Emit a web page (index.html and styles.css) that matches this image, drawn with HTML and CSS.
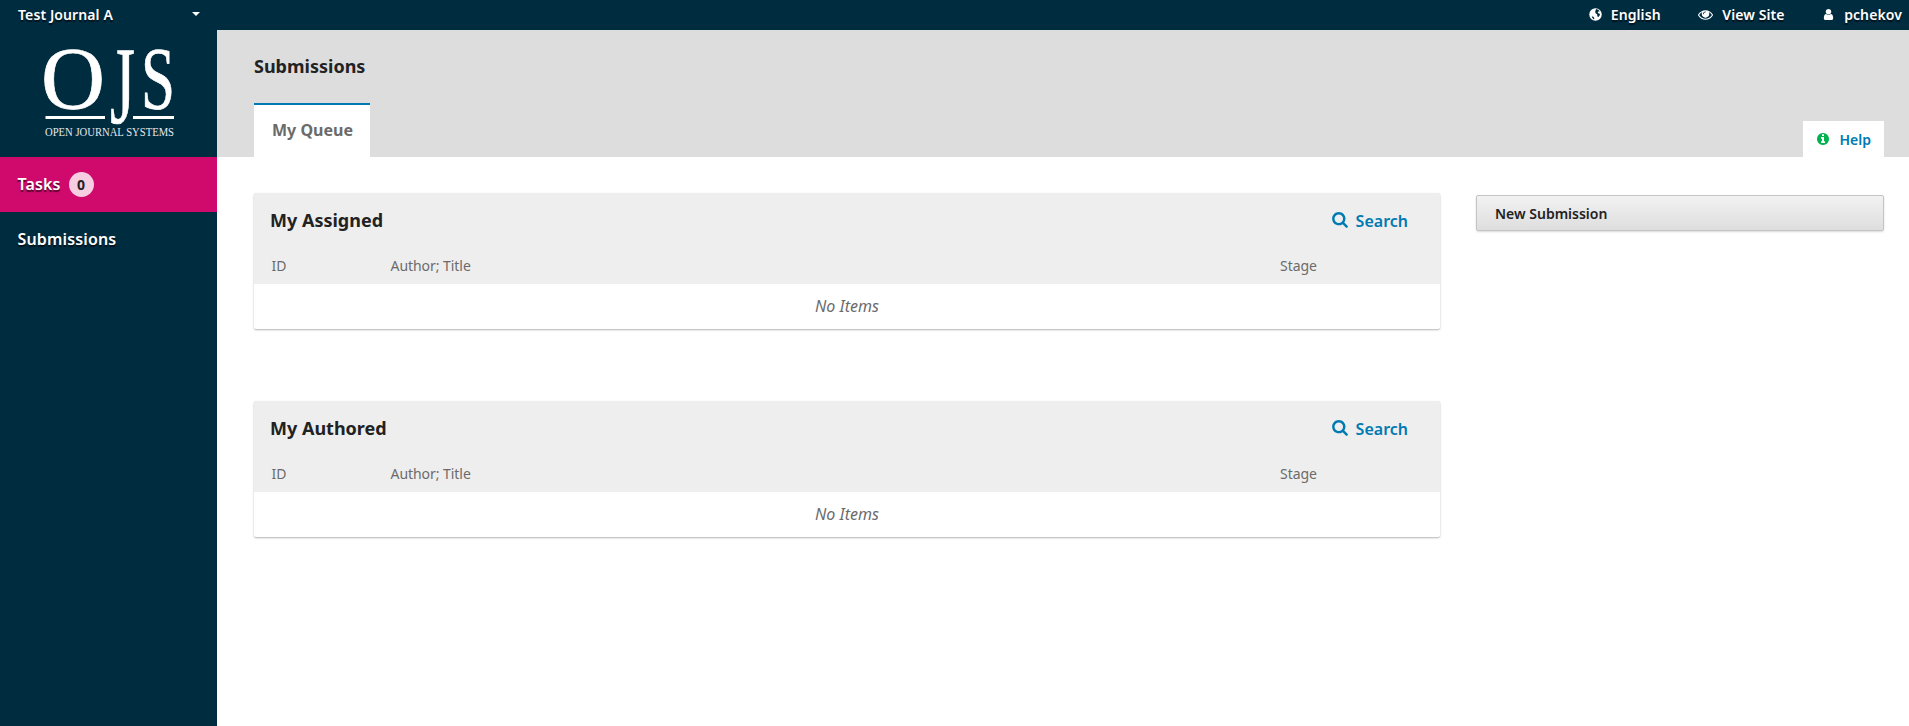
FILE: index.html
```html
<!DOCTYPE html>
<html lang="en">
<head>
  <meta charset="UTF-8">
  <title>Submissions | OJS</title>
  <link rel="stylesheet" href="styles.css">
</head>
<body>
  <!-- Top bar -->
  <header class="topbar">
    <a class="journal-switch">Test Journal A<span class="caret"></span></a>
    <nav class="user-nav">
      <a class="user-link">
        <svg class="user-icon" viewBox="0 0 24 24"><circle cx="12" cy="12" r="11.5" fill="#fff"/><path fill="#002c40" d="M13 2l4 1 3 3-3 .5-1 2.500 3 1 1.500 2.500-3 4-2-1-.5-4-3-2-.5-3.500zM5 15l3 1 2 2.500-1 2.500-3-3z"/></svg>
        English
      </a>
      <a class="user-link">
        <svg class="user-icon eye" viewBox="0 0 1792 1792"><path fill="#fff" d="M1664 960q-152-236-381-353 61 104 61 225 0 185-131.500 316.500t-316.500 131.500-316.500-131.500-131.500-316.500q0-121 61-225-229 117-381 353 133 205 333.500 326.500t434.500 121.500 434.500-121.500 333.500-326.500zm-720-384q0-20-14-34t-34-14q-125 0-214.500 89.500t-89.500 214.500q0 20 14 34t34 14 34-14 14-34q0-86 61-147t147-61q20 0 34-14t14-34zm848 384q0 34-20 69-140 230-376.500 368.500t-499.500 138.500-499.500-139-376.500-368q-20-35-20-69t20-69q140-229 376.500-368t499.500-139 499.500 139 376.500 368q20 35 20 69z"/></svg>
        View Site
      </a>
      <a class="user-link">
        <svg class="user-icon" viewBox="0 0 1792 1792"><path fill="#fff" d="M1536 1399q0 109-62.500 187t-150.500 78h-854q-88 0-150.500-78t-62.500-187q0-85 8.500-160.500t31.500-152 58.500-131 94-89 134.500-34.500q131 128 313 128t313-128q76 0 134.500 34.500t94 89 58.500 131 31.500 152 8.500 160.500zm-256-887q0 159-112.500 271.500t-271.500 112.500-271.500-112.500-112.500-271.500 112.500-271.500 271.500-112.500 271.500 112.500 112.500 271.500z"/></svg>
        pchekov
      </a>
    </nav>
  </header>

  <div class="layout">
    <!-- Sidebar -->
    <aside class="sidebar">
      <div class="logo">
        <svg viewBox="0 0 217 127" width="217" height="127" role="img">
          <text class="logo-mark" x="41" y="78" textLength="64" lengthAdjust="spacingAndGlyphs">O</text>
          <text class="logo-mark logo-j" x="110" y="93" textLength="25" lengthAdjust="spacingAndGlyphs">J</text>
          <text class="logo-mark" x="141" y="78" textLength="34" lengthAdjust="spacingAndGlyphs">S</text>
          <rect x="45.500" y="86" width="59.500" height="3" fill="#fff"/>
          <rect x="133" y="86" width="41" height="3" fill="#fff"/>
          <text class="logo-sub" x="45" y="106" textLength="129" lengthAdjust="spacingAndGlyphs">OPEN JOURNAL SYSTEMS</text>
        </svg>
      </div>
      <a class="side-item active">Tasks <span class="badge">0</span></a>
      <a class="side-item">Submissions</a>
    </aside>

    <div class="main">
      <!-- Page header with tabs -->
      <div class="page-head">
        <h1>Submissions</h1>
        <div class="tabs-row">
          <a class="tab">My Queue</a>
          <a class="help-tab">
            <svg class="help-icon" viewBox="0 0 1792 1792"><circle cx="896" cy="896" r="560" fill="#fff"/><path fill="#00b24e" d="M1152 1376v-160q0-14-9-23t-23-9h-96v-512q0-14-9-23t-23-9h-320q-14 0-23 9t-9 23v160q0 14 9 23t23 9h96v320h-96q-14 0-23 9t-9 23v160q0 14 9 23t23 9h448q14 0 23-9t9-23zm-128-896v-160q0-14-9-23t-23-9h-192q-14 0-23 9t-9 23v160q0 14 9 23t23 9h192q14 0 23-9t9-23zm640 416q0 209-103 385.500t-279.500 279.500-385.500 103-385.500-103-279.500-279.500-103-385.500 103-385.500 279.500-279.500 385.500-103 385.500 103 279.500 279.500 103 385.500z"/></svg>
            Help
          </a>
        </div>
      </div>

      <div class="content">
        <div class="lists">
          <section class="panel">
            <div class="panel-head">
              <h2>My Assigned</h2>
              <a class="search-link">
                <svg class="search-icon" viewBox="0 0 1664 1792"><path fill="#007ab2" d="M1152 704q0-185-131.500-316.500t-316.500-131.500-316.500 131.500-131.500 316.500 131.500 316.500 316.500 131.500 316.500-131.500 131.500-316.500zm512 832q0 52-38 90t-90 38q-54 0-90-38l-343-342q-179 124-399 124-143 0-273.500-55.500t-225-150-150-225-55.500-273.500 55.500-273.500 150-225 225-150 273.500-55.500 273.500 55.500 225 150 150 225 55.500 273.500q0 220-124 399l343 343q37 37 37 90z"/></svg>
                Search
              </a>
            </div>
            <div class="columns"><span>ID</span><span>Author; Title</span><span>Stage</span></div>
            <div class="empty">No Items</div>
          </section>

          <section class="panel">
            <div class="panel-head">
              <h2>My Authored</h2>
              <a class="search-link">
                <svg class="search-icon" viewBox="0 0 1664 1792"><path fill="#007ab2" d="M1152 704q0-185-131.500-316.500t-316.500-131.500-316.500 131.500-131.500 316.500 131.500 316.500 316.500 131.500 316.500-131.500 131.500-316.500zm512 832q0 52-38 90t-90 38q-54 0-90-38l-343-342q-179 124-399 124-143 0-273.500-55.500t-225-150-150-225-55.500-273.500 55.500-273.500 150-225 225-150 273.500-55.500 273.500 55.500 225 150 150 225 55.500 273.500q0 220-124 399l343 343q37 37 37 90z"/></svg>
                Search
              </a>
            </div>
            <div class="columns"><span>ID</span><span>Author; Title</span><span>Stage</span></div>
            <div class="empty">No Items</div>
          </section>
        </div>

        <div class="side-actions">
          <a class="new-button">New Submission</a>
        </div>
      </div>
    </div>
  </div>
</body>
</html>
```

FILE: styles.css
```css
/* OJS backend dashboard */
body {
  margin: 0;
  height: 726px;
  overflow: hidden;
  font-family: "Noto Sans", sans-serif;
  font-size: 14px;
  color: #222;
  background: #fff;
  display: flex;
  flex-direction: column;
}

/* Top bar */
.topbar {
  height: 30px;
  flex: none;
  box-sizing: border-box;
  padding: 0 7px 2px 18px;
  background: #002c40;
  display: flex;
  justify-content: space-between;
  align-items: center;
  color: #fff;
  font-size: 14px;
  font-weight: 600;
  letter-spacing: 0.1px;
  text-shadow: 0 2px 1px rgba(0, 0, 0, 0.6);
}

.journal-switch {
  display: flex;
  align-items: center;
  width: 182px;
  justify-content: space-between;
}

.caret {
  width: 0;
  height: 0;
  border-left: 4px solid transparent;
  border-right: 4px solid transparent;
  border-top: 4px solid #fff;
}

.user-nav {
  display: flex;
  gap: 37.500px;
}

.user-link {
  display: flex;
  align-items: center;
  gap: 9px;
}

.user-icon {
  width: 13px;
  height: 13px;
}

.user-icon.eye {
  width: 15px;
  height: 15px;
}

/* Sidebar */
.layout {
  flex: 1;
  display: flex;
}

.sidebar {
  width: 217px;
  flex: none;
  background: #002c40;
  color: #fff;
}

.logo {
  height: 127px;
}

.logo svg {
  display: block;
  overflow: visible;
}

.logo-mark {
  font-family: "Liberation Serif", serif;
  font-size: 88px;
  fill: #fff;
  stroke: #fff;
  stroke-width: 0.7px;
}

.logo-j {
  font-size: 110px;
}

.logo-sub {
  font-family: "Liberation Serif", serif;
  font-size: 12px;
  fill: #e4e9ec;
}

.side-item {
  display: flex;
  align-items: center;
  gap: 8px;
  height: 55px;
  padding: 0 0 2px 17.500px;
  box-sizing: border-box;
  font-size: 16px;
  font-weight: 600;
  letter-spacing: 0.15px;
  text-shadow: 0 2px 1px rgba(0, 0, 0, 0.6);
}

.side-item.active {
  background: #d00a6c;
}

.badge {
  width: 25px;
  height: 25px;
  margin-top: 2px;
  border-radius: 50%;
  background: #f7cde2;
  color: #222;
  font-size: 14px;
  font-weight: 700;
  text-shadow: none;
  display: flex;
  align-items: center;
  justify-content: center;
}

/* Page header */
.main {
  flex: 1;
  min-width: 0;
}

.page-head {
  height: 127px;
  box-sizing: border-box;
  background: #ddd;
  padding: 0 25px 0 37px;
  display: flex;
  flex-direction: column;
  justify-content: space-between;
}

h1 {
  margin: 0;
  padding-top: 24px;
  font-size: 18px;
  line-height: 24px;
  font-weight: 700;
}

.tabs-row {
  display: flex;
  justify-content: space-between;
  align-items: flex-end;
}

.tab {
  height: 54px;
  box-sizing: border-box;
  padding: 0 17px 2px 18px;
  background: #fff;
  border-top: 2px solid #007ab2;
  color: #6b6b6b;
  font-size: 16px;
  font-weight: 700;
  display: flex;
  align-items: center;
}

.help-tab {
  height: 36px;
  box-sizing: border-box;
  padding: 0 13px;
  background: #fff;
  color: #007ab2;
  font-size: 14px;
  font-weight: 600;
  display: flex;
  align-items: center;
  gap: 10px;
}

.help-icon {
  width: 14px;
  height: 14px;
}

/* Panels */
.content {
  padding: 36px 25px 0 37px;
  display: flex;
  gap: 36px;
}

.lists {
  width: 1186px;
  flex: none;
  display: flex;
  flex-direction: column;
  gap: 72px;
}

.panel {
  border-radius: 2px;
  box-shadow: 0 1px 2px rgba(0, 0, 0, 0.3);
}

.panel-head {
  height: 55px;
  box-sizing: border-box;
  padding: 0 32px 2px 16px;
  background: #eee;
  display: flex;
  justify-content: space-between;
  align-items: center;
}

h2 {
  margin: 0;
  font-size: 18px;
  font-weight: 700;
}

.search-link {
  display: flex;
  align-items: center;
  gap: 8px;
  margin-top: 2px;
  color: #007ab2;
  font-size: 16px;
  font-weight: 600;
}

.search-icon {
  width: 16px;
  height: 17px;
}

.columns {
  height: 36px;
  box-sizing: border-box;
  padding: 0 0 2px 17.500px;
  background: #eee;
  color: #6b6b6b;
  font-size: 14px;
  letter-spacing: -0.05px;
  display: grid;
  grid-template-columns: 119px 889.500px 1fr;
  align-items: center;
}

.empty {
  height: 45px;
  box-sizing: border-box;
  padding-bottom: 2px;
  display: flex;
  align-items: center;
  justify-content: center;
  color: #6b6b6b;
  font-size: 16px;
  font-style: italic;
}

/* Right column */
.side-actions {
  flex: 1;
  padding-top: 2px;
}

.new-button {
  display: flex;
  align-items: center;
  height: 36px;
  box-sizing: border-box;
  padding-left: 18px;
  border: 1px solid #c4c4c4;
  border-radius: 2px;
  background: linear-gradient(#f2f2f2, #dedede);
  box-shadow: 0 1px 2px rgba(0, 0, 0, 0.15);
  color: #222;
  font-size: 14px;
  font-weight: 600;
}
```
